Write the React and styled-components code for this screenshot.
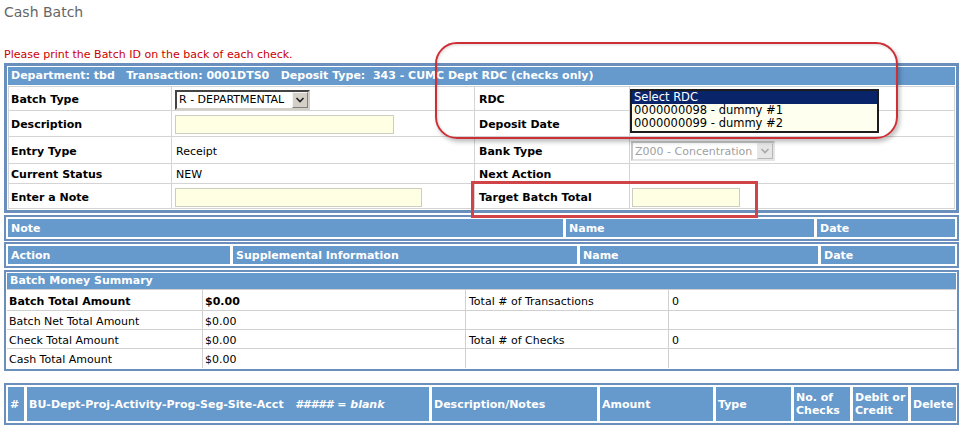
import React from 'react'
import styled, { createGlobalStyle } from 'styled-components'

const GlobalStyle = createGlobalStyle`
  body {
    margin: 0;
    background: #fff;
    font-family: "DejaVu Sans", Verdana, sans-serif;
    font-size: 11px;
    color: #000;
  }
`

const Page = styled.div`
  position: relative;
  padding: 4px 6px 12px 4px;
`

const Title = styled.h1`
  margin: 0;
  font-size: 14px;
  font-weight: normal;
  line-height: 16px;
  color: #666;
`

const Notice = styled.p`
  margin: 28px 0 2px;
  line-height: 13px;
  color: #cc0000;
`

const Panel = styled.div`
  border: ${p => p.$border || 2}px solid #6a8fbd;
  padding: ${p => p.$pad ?? 2}px;
  margin-top: ${p => p.$mt || 0}px;
  background: #fff;
`

const HeaderBar = styled.div`
  background: #6699cc;
  color: #fff;
  font-weight: bold;
  height: ${p => p.$h || 18}px;
  line-height: ${p => p.$h || 18}px;
  padding: 0 3px;
  white-space: pre;
`

const FormGrid = styled.div`
  display: grid;
  grid-template-columns: 162px 302px 154px 1fr;
  grid-template-rows: 23px 25px 26px 19px 24px;
  gap: 1px;
  background: #d4d4d4;
  border: 1px solid #d4d4d4;
  margin-top: 1px;
`

const Cell = styled.div`
  position: relative;
  display: flex;
  align-items: center;
  background: #fff;
  padding-left: ${p => p.$pl ?? 3}px;
  padding-top: 2px;
  font-weight: ${p => (p.$bold ? 'bold' : 'normal')};
  white-space: nowrap;
`

const TextField = styled.input`
  width: ${p => p.$w}px;
  height: 19px;
  box-sizing: border-box;
  margin: 0;
  padding: 0 2px;
  border: 1px solid #cdcdc0;
  background: #ffffe3;
  font: inherit;
  outline: none;
`

const SelectBox = styled.div`
  display: flex;
  align-items: center;
  width: ${p => p.$w}px;
  height: 20px;
  box-sizing: border-box;
  border: 2px solid;
  border-color: ${p => (p.$disabled ? '#c8c8c8 #e4e4e4 #e4e4e4 #c8c8c8' : '#444 #d4d0c8 #d4d0c8 #444')};
  background: #fff;
  color: ${p => (p.$disabled ? '#a0a0a0' : '#000')};
  font-size: 11px;
`

const SelectText = styled.span`
  flex: 1;
  padding-left: 2px;
  overflow: hidden;
  white-space: nowrap;
`

const ArrowButton = styled.span`
  display: flex;
  align-items: center;
  justify-content: center;
  width: 16px;
  height: 16px;
  box-sizing: border-box;
  border: 1px solid;
  border-color: ${p => (p.$disabled ? '#e8e8e8 #b8b8b8 #b8b8b8 #e8e8e8' : '#f4f4f4 #808080 #808080 #f4f4f4')};
  background: ${p => (p.$disabled ? '#e6e6e6' : '#d4d0c8')};
`

const ListBox = styled.div`
  position: absolute;
  top: 2px;
  left: 0;
  width: 249px;
  height: 44px;
  box-sizing: border-box;
  border: 2px solid #1c1c1c;
  background: #fffff0;
  z-index: 2;
  font-size: 11.5px;
`

const ListOption = styled.div`
  height: 13px;
  line-height: 13px;
  padding-left: 2px;
  white-space: nowrap;
  background: ${p => (p.$selected ? '#0a246a' : 'transparent')};
  color: ${p => (p.$selected ? '#fff' : '#000')};
`

const BarRow = styled.div`
  display: flex;
  gap: 3px;
`

const BarCell = styled.div`
  flex: ${p => (p.$w ? `0 0 ${p.$w}px` : '1')};
  display: flex;
  align-items: center;
  box-sizing: border-box;
  height: ${p => p.$h || 18}px;
  padding: 0 ${p => p.$px ?? 3}px;
  background: #6699cc;
  color: #fff;
  font-weight: bold;
  line-height: 13px;
  white-space: pre;
`

const Blank = styled.i`
  font-weight: bold;
`

const MoneyGrid = styled.div`
  display: grid;
  grid-template-columns: 195px 262px 202px 1fr;
  grid-template-rows: 20px 18px 18px 19px;
  gap: 1px;
  background: #d0d0d0;
  border-top: 1px solid #d0d0d0;
`

const Callout = styled.div`
  position: absolute;
  left: 435px;
  top: 42px;
  width: 463px;
  height: 97px;
  box-sizing: border-box;
  border: 2px solid #cc2f36;
  border-radius: 22px;
  box-shadow: 2px 3px 4px rgba(0, 0, 0, 0.25), inset 1px 1px 3px rgba(0, 0, 0, 0.15);
  z-index: 5;
  pointer-events: none;
`

const Highlight = styled.div`
  position: absolute;
  left: 471px;
  top: 181px;
  width: 287px;
  height: 37px;
  box-sizing: border-box;
  border: 3px solid #d04448;
  z-index: 5;
  pointer-events: none;
`

const Chevron = ({ color }) => (
  <svg width="10" height="8" viewBox="0 0 10 8">
    <polyline points="1.5,2 5,5.5 8.5,2" fill="none" stroke={color} strokeWidth="1.6" />
  </svg>
)

const FakeSelect = ({ width, value, disabled }) => (
  <SelectBox $w={width} $disabled={disabled}>
    <SelectText>{value}</SelectText>
    <ArrowButton $disabled={disabled}>
      <Chevron color={disabled ? '#a8a8a8' : '#222'} />
    </ArrowButton>
  </SelectBox>
)

const noteCols = [
  { label: 'Note', w: 555 },
  { label: 'Name', w: 248 },
  { label: 'Date' },
]

const actionCols = [
  { label: 'Action', w: 222 },
  { label: 'Supplemental Information', w: 344 },
  { label: 'Name', w: 238 },
  { label: 'Date' },
]

const money = [
  ['Batch Total Amount', '$0.00', 'Total # of Transactions', '0', true],
  ['Batch Net Total Amount', '$0.00', '', '', false],
  ['Check Total Amount', '$0.00', 'Total # of Checks', '0', false],
  ['Cash Total Amount', '$0.00', '', '', false],
]

export default function App() {
  return (
    <Page>
      <GlobalStyle />
      <Title>Cash Batch</Title>
      <Notice>Please print the Batch ID on the back of each check.</Notice>

      <Panel $border={3} $pad={1}>
        <HeaderBar>
          {'Department: tbd   Transaction: 0001DTS0   Deposit Type:  343 - CUMC Dept RDC (checks only)'}
        </HeaderBar>
        <FormGrid>
          <Cell $bold $pl={2}>Batch Type</Cell>
          <Cell $pl={3}>
            <FakeSelect width={135} value="R - DEPARTMENTAL" />
          </Cell>
          <Cell $bold $pl={4}>RDC</Cell>
          <Cell $pl={2}>
            <ListBox>
              <ListOption $selected>Select RDC</ListOption>
              <ListOption>0000000098 - dummy #1</ListOption>
              <ListOption>0000000099 - dummy #2</ListOption>
            </ListBox>
          </Cell>

          <Cell $bold $pl={2}>Description</Cell>
          <Cell $pl={3}>
            <TextField $w={219} />
          </Cell>
          <Cell $bold $pl={4}>Deposit Date</Cell>
          <Cell $pl={2} />

          <Cell $bold $pl={2}>Entry Type</Cell>
          <Cell $pl={4}>Receipt</Cell>
          <Cell $bold $pl={4}>Bank Type</Cell>
          <Cell $pl={1}>
            <FakeSelect width={144} value="Z000 - Concentration" disabled />
          </Cell>

          <Cell $bold $pl={2}>Current Status</Cell>
          <Cell $pl={4}>NEW</Cell>
          <Cell $bold $pl={4}>Next Action</Cell>
          <Cell $pl={2} />

          <Cell $bold $pl={2}>Enter a Note</Cell>
          <Cell $pl={3}>
            <TextField $w={247} />
          </Cell>
          <Cell $bold $pl={4}>Target Batch Total</Cell>
          <Cell $pl={2}>
            <TextField $w={108} />
          </Cell>
        </FormGrid>
      </Panel>

      <Panel $mt={2}>
        <BarRow>
          {noteCols.map(c => (
            <BarCell key={c.label} $w={c.w}>{c.label}</BarCell>
          ))}
        </BarRow>
      </Panel>

      <Panel $mt={1}>
        <BarRow>
          {actionCols.map(c => (
            <BarCell key={c.label} $w={c.w}>{c.label}</BarCell>
          ))}
        </BarRow>
      </Panel>

      <Panel $mt={2} $pad={1}>
        <HeaderBar $h={16}>Batch Money Summary</HeaderBar>
        <MoneyGrid>
          {money.map(([label, amount, countLabel, count, bold]) => (
            <React.Fragment key={label}>
              <Cell $bold={bold} $pl={2}>{label}</Cell>
              <Cell $bold={bold} $pl={2}>{amount}</Cell>
              <Cell $pl={3}>{countLabel}</Cell>
              <Cell $pl={3}>{count}</Cell>
            </React.Fragment>
          ))}
        </MoneyGrid>
      </Panel>

      <Panel $mt={12}>
        <BarRow>
          <BarCell $w={16} $h={34} $px={2}>#</BarCell>
          <BarCell $w={402} $h={34} $px={2}>
            {'BU-Dept-Proj-Activity-Prog-Seg-Site-Acct   '}
            <Blank>##### = blank</Blank>
          </BarCell>
          <BarCell $w={165} $h={34} $px={2}>Description/Notes</BarCell>
          <BarCell $w={113} $h={34} $px={2}>Amount</BarCell>
          <BarCell $w={75} $h={34} $px={2}>Type</BarCell>
          <BarCell $w={56} $h={34} $px={2}>{'No. of\nChecks'}</BarCell>
          <BarCell $w={55} $h={34} $px={2}>{'Debit or\nCredit'}</BarCell>
          <BarCell $h={34} $px={2}>Delete</BarCell>
        </BarRow>
      </Panel>

      <Callout />
      <Highlight />
    </Page>
  )
}
